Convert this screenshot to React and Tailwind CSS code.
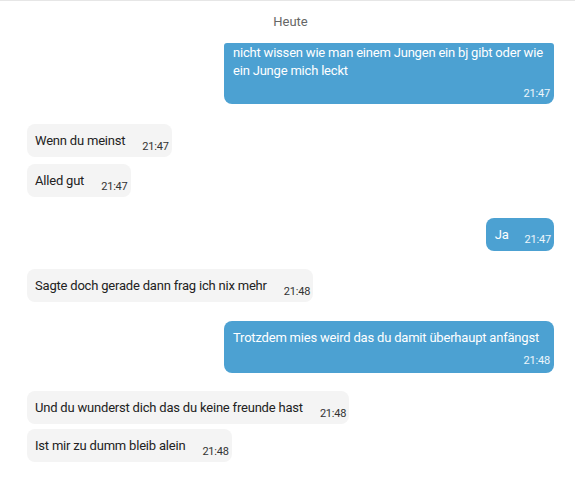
const messages = [
  { side: 'out', text: 'nicht wissen wie man einem Jungen ein bj gibt oder wie ein Junge mich leckt', time: '21:47', mt: 'mt-[12px]', clipped: true },
  { side: 'in', text: 'Wenn du meinst', time: '21:47', mt: 'mt-[20px]' },
  { side: 'in', text: 'Alled gut', time: '21:47', mt: 'mt-[7px]' },
  { side: 'out-short', text: 'Ja', time: '21:47', mt: 'mt-[21px]' },
  { side: 'in', text: 'Sagte doch gerade dann frag ich nix mehr', time: '21:48', mt: 'mt-[18px]' },
  { side: 'out', text: 'Trotzdem mies weird das du damit überhaupt anfängst', time: '21:48', mt: 'mt-[19px]' },
  { side: 'in', text: 'Und du wunderst dich das du keine freunde hast', time: '21:48', mt: 'mt-[18px]' },
  { side: 'in', text: 'Ist mir zu dumm bleib alein', time: '21:48', mt: 'mt-[5px]' },
];

const Incoming = ({ msg }) => (
  <div className={`${msg.mt} ml-[27px] self-start flex items-end bg-[#f4f4f4] rounded-[8px] pl-[8px] pr-[3px] pt-[8px] pb-[3px]`}>
    <span className="text-[13px] leading-[18px] tracking-[-0.2px] text-[#222] mb-[4px]">{msg.text}</span>
    <span className="ml-[17px] text-[11px] leading-[14px] tracking-[-0.2px] text-[#333]">{msg.time}</span>
  </div>
);

const OutgoingShort = ({ msg }) => (
  <div className={`${msg.mt} mr-[21px] self-end flex items-end bg-[#4ca1d2] rounded-[8px] pl-[9px] pr-[3px] pt-[8px] pb-[4px]`}>
    <span className="text-[13px] leading-[18px] tracking-[-0.2px] text-white mb-[3px]">{msg.text}</span>
    <span className="ml-[16px] text-[11px] leading-[14px] tracking-[-0.2px] text-white/90">{msg.time}</span>
  </div>
);

const Outgoing = ({ msg }) => (
  <div
    className={`${msg.mt} mr-[21px] self-end w-[330px] bg-[#4ca1d2] flex flex-col pl-[9px] pr-[4px] ${
      msg.clipped ? 'rounded-b-[8px] rounded-t-[3px] pt-[1px] pb-[3px]' : 'rounded-[8px] pt-[8px] pb-[5px]'
    }`}
  >
    <p className="text-[13px] leading-[18px] tracking-[-0.2px] text-white">{msg.text}</p>
    <span className="mt-[7px] self-end text-[11px] leading-[14px] tracking-[-0.2px] text-white/90">{msg.time}</span>
  </div>
);

export default function App() {
  return (
    <div
      className="w-[575px] h-[480px] bg-white border-t border-[#e6e6e6] overflow-hidden flex flex-col"
      style={{ fontFamily: 'Roboto, "Noto Sans", sans-serif' }}
    >
      <div className="pt-[12px] text-center text-[13px] leading-[18px] text-[#666] pl-[6px]">Heute</div>
      {messages.map((m, i) => {
        if (m.side === 'in') return <Incoming key={i} msg={m} />;
        if (m.side === 'out-short') return <OutgoingShort key={i} msg={m} />;
        return <Outgoing key={i} msg={m} />;
      })}
    </div>
  );
}
